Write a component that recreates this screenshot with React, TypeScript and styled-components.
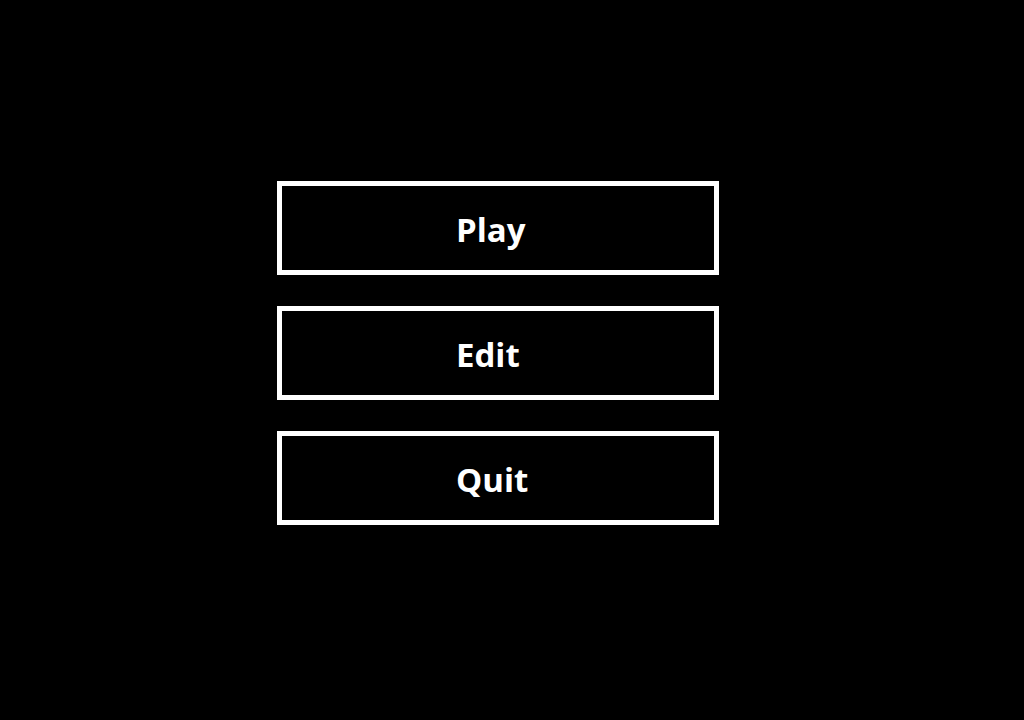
import styled, { createGlobalStyle } from "styled-components";

const GlobalStyle = createGlobalStyle`
    html, body {
        margin: 0;
        padding: 0;
        background: #000;
    }
    body {
        width: 1024px;
        height: 720px;
        overflow: hidden;
    }
`;

const Screen = styled.div`
    width: 1024px;
    height: 720px;
    background: #000;
    box-sizing: border-box;
    padding: 181px 0 0 277px;
`;

const Menu = styled.nav`
    display: flex;
    flex-direction: column;
    gap: 31px;
`;

const MenuButton = styled.button`
    display: flex;
    align-items: center;
    box-sizing: border-box;
    width: 442px;
    height: 94px;
    margin: 0;
    padding: 2px 0 0 174px;
    background: #000;
    border: 5px solid #fff;
    border-radius: 0;
    color: #fff;
    font: 700 33px "Open Sans", "Liberation Sans", sans-serif;
    line-height: 45px;
    cursor: pointer;
`;

export default function App() {
    return (
        <>
            <GlobalStyle />
            <Screen>
                <Menu>
                    <MenuButton>Play</MenuButton>
                    <MenuButton>Edit</MenuButton>
                    <MenuButton>Quit</MenuButton>
                </Menu>
            </Screen>
        </>
    );
}
